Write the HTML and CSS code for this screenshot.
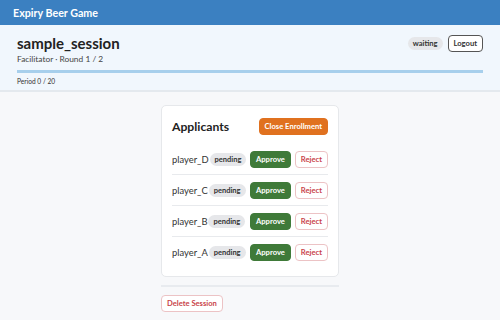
FILE: index.html
```html
<!DOCTYPE html>
<html lang="en">
<head>
    <meta charset="UTF-8">
    <title>Expiry Beer Game</title>
    <link rel="stylesheet" href="styles.css">
</head>
<body>
    <div class="topbar">Expiry Beer Game</div>

    <div class="session-head">
        <div class="head-row">
            <div>
                <h1>sample_session</h1>
                <div class="meta">Facilitator · Round 1 / 2</div>
            </div>
            <div class="head-actions">
                <span class="badge">waiting</span>
                <button class="btn btn-outline">Logout</button>
            </div>
        </div>
        <div class="progress"><div class="progress-fill" style="width: 100%"></div></div>
        <div class="period">Period 0 / 20</div>
    </div>

    <div class="main">
        <div class="card">
            <div class="card-head">
                <h2>Applicants</h2>
                <button class="btn btn-orange">Close Enrollment</button>
            </div>
            <div class="applicant">
                <span class="name">player_D</span><span class="badge">pending</span>
                <div class="actions">
                    <button class="btn btn-green">Approve</button>
                    <button class="btn btn-reject">Reject</button>
                </div>
            </div>
            <div class="applicant">
                <span class="name">player_C</span><span class="badge">pending</span>
                <div class="actions">
                    <button class="btn btn-green">Approve</button>
                    <button class="btn btn-reject">Reject</button>
                </div>
            </div>
            <div class="applicant">
                <span class="name">player_B</span><span class="badge">pending</span>
                <div class="actions">
                    <button class="btn btn-green">Approve</button>
                    <button class="btn btn-reject">Reject</button>
                </div>
            </div>
            <div class="applicant">
                <span class="name">player_A</span><span class="badge">pending</span>
                <div class="actions">
                    <button class="btn btn-green">Approve</button>
                    <button class="btn btn-reject">Reject</button>
                </div>
            </div>
        </div>
        <hr class="divider">
        <button class="btn btn-reject btn-delete">Delete Session</button>
    </div>
</body>
</html>
```

FILE: styles.css
```css
:root {
    --blue: #3b80c1;
    --light-blue: #f1f7fd;
    --bar: #a7cfec;
    --green: #3f7a39;
    --orange: #e0711f;
    --red: #c9434a;
    --text: #222;
}
* {
    box-sizing: border-box;
}
body {
    margin: 0;
    font-family: Lato, "Liberation Sans", sans-serif;
    background: #f7f8fa;
    color: var(--text);
}
.topbar {
    background: var(--blue);
    color: white;
    font-weight: bold;
    font-size: 10.7px;
    height: 25px;
    line-height: 25px;
    padding: 0 13px;
}
.session-head {
    background: var(--light-blue);
    border-bottom: 2px solid #e4e9ee;
    padding: 10px 17px 5px;
}
.head-row {
    display: flex;
    justify-content: space-between;
    align-items: flex-start;
}
h1 {
    margin: 0;
    font-size: 15px;
    line-height: 17px;
}
.meta {
    font-size: 8.4px;
    line-height: 10px;
    color: #444;
    margin-top: 2px;
}
.head-actions {
    display: flex;
    align-items: center;
    gap: 5px;
}
.progress {
    margin-top: 6px;
    height: 3px;
    background: #dfe8f0;
}
.progress-fill {
    height: 100%;
    background: var(--bar);
}
.period {
    font-size: 6.6px;
    line-height: 8px;
    color: #333;
    margin-top: 4px;
}
.badge {
    background: #e6e7ea;
    color: #333;
    font-weight: bold;
    font-size: 7.5px;
    line-height: 9px;
    border-radius: 7px;
    padding: 2px 5px;
}
.btn {
    font-family: inherit;
    font-size: 7.6px;
    font-weight: bold;
    border-radius: 4px;
    padding: 3px 5px;
    cursor: pointer;
    line-height: 9px;
}
.btn-outline {
    background: white;
    border: 1px solid #555;
    color: #333;
}
.main {
    width: 178px;
    margin: 13px auto 0;
}
.card {
    background: white;
    border: 1px solid #e6e8eb;
    border-radius: 5px;
    padding: 10px 10px 8px;
}
.card-head {
    display: flex;
    justify-content: space-between;
    align-items: center;
    height: 20px;
    margin-bottom: 8px;
}
h2 {
    margin: 0;
    font-size: 12.2px;
}
.btn-orange {
    background: var(--orange);
    border: 1px solid var(--orange);
    color: white;
}
.applicant {
    display: flex;
    align-items: center;
    height: 31px;
    border-bottom: 1px solid #e8eaed;
}
.applicant:last-child {
    border-bottom: none;
}
.name {
    font-size: 9.4px;
    color: #333;
    margin-right: 1px;
}
.actions {
    margin-left: auto;
    display: flex;
    gap: 4px;
}
.btn-green {
    background: var(--green);
    border: 1px solid var(--green);
    color: white;
}
.btn-reject {
    background: white;
    border: 1px solid #ecc3c5;
    color: var(--red);
}
.divider {
    border: none;
    border-top: 2px solid #e8ebef;
    margin: 8px 0;
}
.btn-delete {
    display: block;
}
```
